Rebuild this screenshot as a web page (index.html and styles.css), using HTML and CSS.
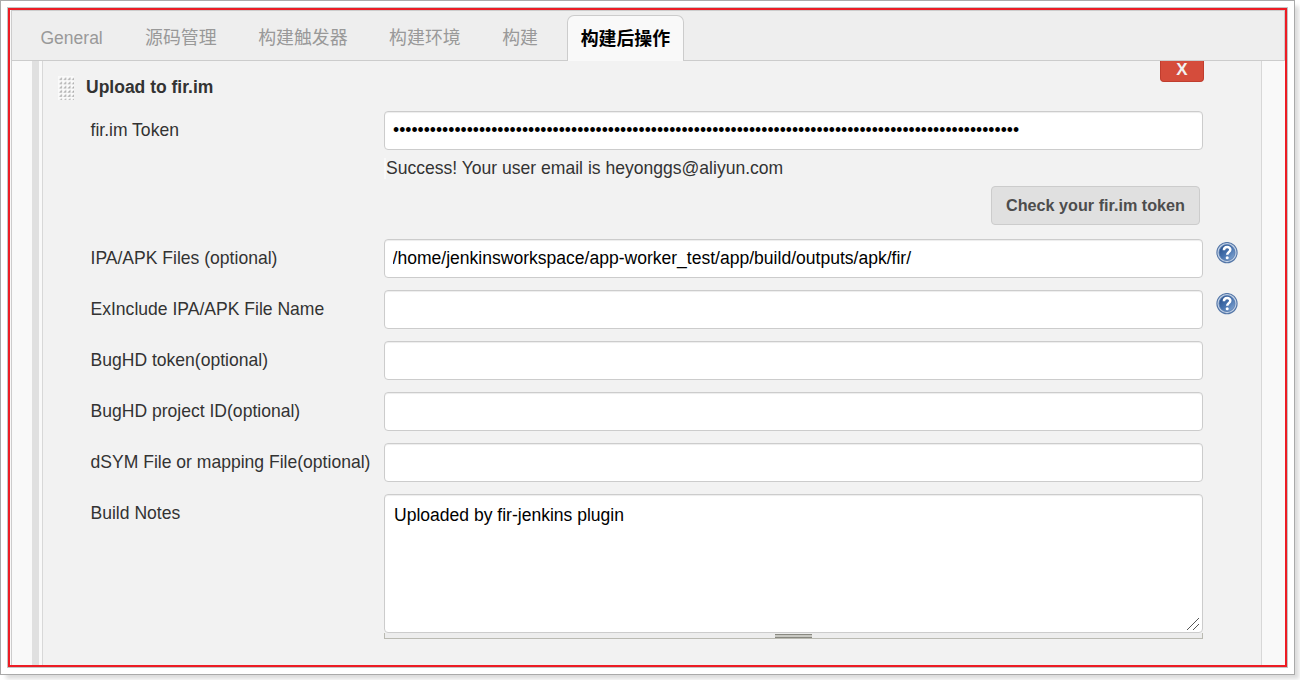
FILE: index.html
```html
<!DOCTYPE html>
<html lang="zh-CN">
<head>
<meta charset="utf-8">
<title>构建后操作</title>
<link rel="stylesheet" href="styles.css">
</head>
<body>
<div class="frame">
  <div class="outline">
    <div class="config">
      <nav class="tabs">
        <a class="tab tab-latin">General</a>
        <a class="tab">源码管理</a>
        <a class="tab">构建触发器</a>
        <a class="tab">构建环境</a>
        <a class="tab">构建</a>
        <a class="tab active">构建后操作</a>
      </nav>
      <div class="body">
        <div class="rail"></div>
        <section class="panel">
          <header class="panel-head">
            <svg class="grip" width="16" height="24" viewBox="0 0 16 24">
              <defs>
                <pattern id="dots" x="0" y="0" width="4.2" height="4.2" patternUnits="userSpaceOnUse">
                  <rect width="4.2" height="4.2" fill="#fafafa"/>
                  <path d="M4 1V4H1Z" fill="#aaa"/>
                </pattern>
              </defs>
              <rect width="16" height="24" fill="url(#dots)"/>
            </svg>
            <b class="title">Upload to fir.im</b>
            <button class="delete">X</button>
          </header>
          <div class="form">
            <div class="row">
              <label>fir.im Token</label>
              <input class="secret" type="password" value="abcdefghijabcdefghijabcdefghijabcdefghijabcdefghijabcdefghijabcdefghijabcdefghijabcdefghijabcdefghijab">
            </div>
            <div class="status"><span>Success! Your user email is heyonggs@aliyun.com</span></div>
            <div class="action"><button class="check">Check your fir.im token</button></div>
            <div class="row">
              <label>IPA/APK Files (optional)</label>
              <input type="text" value="/home/jenkinsworkspace/app-worker_test/app/build/outputs/apk/fir/">
              <svg class="help" width="22" height="22" viewBox="0 0 22 22">
                <defs>
                  <linearGradient id="ball" x1="0" y1="0" x2="1" y2="1">
                    <stop offset="0" stop-color="#234b86"/>
                    <stop offset=".5" stop-color="#4672ae"/>
                    <stop offset="1" stop-color="#8fb0d8"/>
                  </linearGradient>
                </defs>
                <circle cx="11" cy="10.6" r="10.1" fill="#c3d2e6" stroke="#5577a8" stroke-width="1.1"/>
                <circle cx="11" cy="10.6" r="8" fill="url(#ball)" stroke="#5479ad" stroke-width=".8"/>
                <path d="M7.9 8.2C8 3.9 14.4 4.1 14.3 7.7C14.2 10.2 11.2 10.1 11.2 12.8" fill="none" stroke="#fff" stroke-width="2.5"/>
                <circle cx="11.2" cy="15.7" r="1.5" fill="#fff"/>
              </svg>
            </div>
            <div class="row">
              <label>ExInclude IPA/APK File Name</label>
              <input type="text">
              <svg class="help" width="22" height="22" viewBox="0 0 22 22">
                <circle cx="11" cy="10.6" r="10.1" fill="#c3d2e6" stroke="#5577a8" stroke-width="1.1"/>
                <circle cx="11" cy="10.6" r="8" fill="url(#ball)" stroke="#5479ad" stroke-width=".8"/>
                <path d="M7.9 8.2C8 3.9 14.4 4.1 14.3 7.7C14.2 10.2 11.2 10.1 11.2 12.8" fill="none" stroke="#fff" stroke-width="2.5"/>
                <circle cx="11.2" cy="15.7" r="1.5" fill="#fff"/>
              </svg>
            </div>
            <div class="row"><label>BugHD token(optional)</label><input type="text"></div>
            <div class="row"><label>BugHD project ID(optional)</label><input type="text"></div>
            <div class="row"><label>dSYM File or mapping File(optional)</label><input type="text"></div>
            <div class="row notes">
              <label>Build Notes</label>
              <div class="area">
                <textarea>Uploaded by fir-jenkins plugin</textarea>
                <svg class="corner" width="12" height="12" viewBox="0 0 12 12"><path d="M0 12L12 0M6 12L12 6" stroke="#555" stroke-width="1"/></svg>
                <div class="handle"><span></span></div>
              </div>
            </div>
          </div>
        </section>
      </div>
    </div>
  </div>
</div>
</body>
</html>
```
FILE: styles.css
```css
* { box-sizing: border-box; }
body {
  margin: 0;
  height: 680px;
  overflow: hidden;
  background: #fff;
  color: #333;
  font-family: "Liberation Sans", "Noto Sans CJK SC", sans-serif;
  font-size: 17.56px;
}
.frame {
  width: 1295px;
  height: 675px;
  padding: 6px;
  border: 1px solid #aaa;
  background: #fff;
  box-shadow: 5px 5px 4px -1px #ddd;
}
.outline {
  width: 1281px;
  height: 661px;
  border: 1px solid #c4c4c4;
}
.config {
  height: 659px;
  border: 2px solid #ed1c24;
  padding-left: 1px;
  background: #f9f9f9;
  display: flex;
  flex-direction: column;
}
.tabs {
  height: 51px;
  flex: none;
  display: flex;
  align-items: flex-end;
  padding: 0 0 0 14.5px;
  background: #eee;
  border: 1px solid #ccc;
}
.tab {
  height: 46px;
  padding: 0 13px;
  border: 1px solid transparent;
  border-bottom: 0;
  margin-right: 13.5px;
  font-size: 17.9px;
  line-height: 46px;
  color: #999;
  white-space: nowrap;
}
.tab-latin { margin-right: 14.3px; font-size: 17.5px; }
.tab.active {
  width: 117px;
  margin: 0 0 -1px 1.2px;
  background: #f9f9f9;
  border-color: #ccc;
  border-radius: 7px 7px 0 0;
  color: #000;
  font-weight: bold;
}
.body {
  flex: 1;
  min-height: 0;
  display: flex;
  padding-left: 20px;
  border-left: 1px solid #ccc;
}
.rail { width: 7px; background: #e0e0e0; }
.panel {
  width: 1220px;
  margin-left: 3px;
  padding-left: 15px;
  border: solid #d8d8d8;
  border-width: 0 1px;
  background: #f2f2f2;
}
.panel-head {
  height: 50px;
  display: flex;
  align-items: flex-start;
}
.grip { margin-top: 15px; }
.title { margin: 16px 0 0 12px; font-size: 17.5px; line-height: 20px; }
.delete {
  width: 44px;
  height: 21px;
  margin-left: auto;
  margin-right: 57px;
  padding: 0 0 2px;
  border: 1px solid #c03d2e;
  border-top: 0;
  border-radius: 0 0 4px 4px;
  background: #d54c3b;
  color: #f2f2f2;
  font: bold 17px/16px "Liberation Sans", sans-serif;
}
.form { padding-left: 32px; }
.row {
  display: grid;
  grid-template-columns: 294px 819px 22px;
  column-gap: 0;
  height: 51px;
}
label { padding: 9px 0 0 .5px; line-height: 20px; white-space: nowrap; }
input, textarea {
  display: block;
  width: 819px;
  margin: 0;
  border: 1px solid #ccc;
  border-radius: 4px;
  outline: 0;
  background: #fff;
  box-shadow: inset 0 1px 1px rgba(0,0,0,.075);
  color: #000;
  font: 17.55px "Liberation Sans", sans-serif;
}
input { height: 39px; padding: 0 8px 1px 7.6px; }
.secret { padding: 0 8px 1px; }
.help { margin: 3px 0 0 13px; }
.status { height: 24px; margin: -4px 0 0 294px; }
.status span {
  display: block;
  border-left: 2px solid #f9f9f9;
  line-height: 21px;
}
.action {
  height: 57px;
  padding: 4px 0 0 901px;
}
.check {
  width: 209px;
  height: 39px;
  padding: 0;
  border: 1px solid #ccc;
  border-radius: 4px;
  background: #e0e0e0;
  color: #4d4d4d;
  font: bold 16.2px "Liberation Sans", sans-serif;
}
.area { position: relative; }
textarea { height: 139px; padding: 10px 9px; resize: none; }
.corner { position: absolute; left: 803px; top: 124px; }
.handle {
  width: 819px;
  height: 6px;
  border: solid #babab2;
  border-width: 0 1px 1px;
  background: #ededed;
  display: flex;
  justify-content: center;
}
.handle span {
  width: 37px;
  height: 4px;
  margin-top: 1px;
  background: #c8c8c2;
  border: solid #888880;
  border-width: 1px 0;
}
```
